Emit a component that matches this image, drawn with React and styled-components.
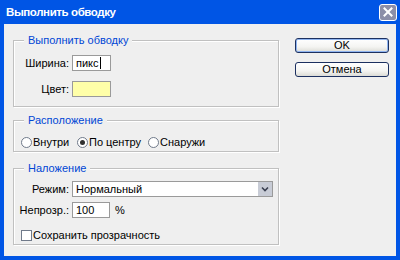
import React from 'react';
import styled, { createGlobalStyle } from 'styled-components';

const Global = createGlobalStyle`
  html, body { margin: 0; padding: 0; }
  body {
    width: 400px; height: 260px; overflow: hidden;
    font-family: "Liberation Sans", Arial, sans-serif;
    font-size: 11px; line-height: 13px; color: #000;
  }
`;

const Window = styled.div`
  width: 400px; height: 260px; box-sizing: border-box;
  background: #0055e5;
  display: flex; flex-direction: column;
`;

const TitleBar = styled.div`
  height: 24px; flex-shrink: 0;
  display: flex; align-items: center; justify-content: space-between;
  padding: 0 3px 0 6px;
`;

const Title = styled.div`
  color: #fff; font-weight: bold; font-size: 11.5px; letter-spacing: -0.4px;
`;

const CloseBtn = styled.div`
  width: 18px; height: 17px; box-sizing: border-box;
  border: 1px solid #fff; border-radius: 3px;
  background: #8c8fa8;
  display: flex; align-items: center; justify-content: center;
`;

const Body = styled.div`
  flex: 1; margin: 0 4px 4px;
  background: #efefef;
  display: flex; gap: 16px;
  padding: 0 0 0 9px;
`;

const LeftCol = styled.div`
  width: 266px; padding-top: 16px;
  display: flex; flex-direction: column;
`;

const RightCol = styled.div`
  width: 94px; padding-top: 14px;
  display: flex; flex-direction: column; gap: 9px;
`;

const Group = styled.div`
  position: relative;
  margin-top: ${p => p.$mt || 0}px;
  padding: ${p => p.$pt}px 4px ${p => p.$pb}px 0;
  border: 1px solid #c0c0c0;
  box-shadow: 1px 1px 0 #fff, inset 1px 1px 0 #fff;
`;

const Legend = styled.div`
  position: absolute; top: -7px; left: 10px;
  padding: 0 4px; background: #efefef;
  color: #0046d5;
`;

const FormGrid = styled.div`
  display: grid;
  grid-template-columns: 55px auto;
  column-gap: 3px;
  row-gap: ${p => p.$gap}px;
  align-items: center;
`;

const Label = styled.div`
  text-align: right;
`;

const Field = styled.div`
  display: flex; align-items: center; gap: 5px;
`;

const TextBox = styled.div`
  width: ${p => p.$w}px; height: 16px; box-sizing: border-box;
  border: 1px solid #9a9a9a; background: #fff;
  padding: 0 3px; display: flex; align-items: center;
`;

const Caret = styled.span`
  display: inline-block; width: 1px; height: 12px; background: #000; margin-left: 1px;
`;

const Swatch = styled.div`
  width: 39px; height: 16px; box-sizing: border-box;
  border: 1px solid #9a9a9a; background: #ffffa8;
`;

const RadioRow = styled.div`
  display: flex; align-items: center; padding-left: 7px; height: 14px;
`;

const RadioItem = styled.label`
  display: flex; align-items: center; gap: 1px;
  width: ${p => (p.$w ? `${p.$w}px` : 'auto')};
`;

const RadioCircle = styled.span`
  width: 11px; height: 11px; box-sizing: border-box; border-radius: 50%;
  border: 1px solid #707a8a; background: #fff;
  display: flex; align-items: center; justify-content: center;
  &::after {
    content: ''; width: 5px; height: 5px; border-radius: 50%;
    background: ${p => (p.$on ? '#303030' : 'transparent')};
  }
`;

const Select = styled.div`
  width: 201px; height: 16px; box-sizing: border-box;
  border: 1px solid #9a9a9a; background: #fff;
  display: flex; align-items: center; justify-content: space-between;
  padding-left: 3px;
`;

const SelectBtn = styled.div`
  width: 14px; height: 14px; background: #c8ccd6;
  display: flex; align-items: center; justify-content: center;
`;

const CheckRow = styled.label`
  grid-column: 1 / -1;
  margin-top: 6px;
  display: flex; align-items: center; gap: 1px; padding-left: 7px; height: 13px;
`;

const CheckBox = styled.span`
  width: 11px; height: 11px; box-sizing: border-box;
  border: 1px solid #707a8a; background: #fff;
`;

const Button = styled.div`
  height: 15px; box-sizing: border-box;
  border: 1px solid #1c3060; border-radius: 3px;
  background: linear-gradient(#ffffff 0%, #f4f4f2 60%, #dcdcd6 100%);
  box-shadow: ${p => (p.$default ? 'inset 0 0 0 1px #8fb4f0' : 'none')};
  display: flex; align-items: center; justify-content: center;
  color: #000;
`;

export default function App() {
  return (
    <>
      <Global />
      <Window>
        <TitleBar>
          <Title>Выполнить обводку</Title>
          <CloseBtn>
            <svg width="10" height="10" viewBox="0 0 10 10">
              <path d="M1.5 1.5 L8.5 8.5 M8.5 1.5 L1.5 8.5" stroke="#fff" strokeWidth="2" strokeLinecap="square" />
            </svg>
          </CloseBtn>
        </TitleBar>
        <Body>
          <LeftCol>
            <Group $pt={14} $pb={9}>
              <Legend>Выполнить обводку</Legend>
              <FormGrid $gap={10}>
                <Label>Ширина:</Label>
                <TextBox $w={39}>пикс<Caret /></TextBox>
                <Label>Цвет:</Label>
                <Swatch />
              </FormGrid>
            </Group>
            <Group $mt={13} $pt={14} $pb={2}>
              <Legend>Расположение</Legend>
              <RadioRow>
                <RadioItem $w={56}><RadioCircle />Внутри</RadioItem>
                <RadioItem $w={71}><RadioCircle $on />По центру</RadioItem>
                <RadioItem><RadioCircle />Снаружи</RadioItem>
              </RadioRow>
            </Group>
            <Group $mt={16} $pt={12} $pb={2}>
              <Legend>Наложение</Legend>
              <FormGrid $gap={5}>
                <Label>Режим:</Label>
                <Select>
                  Нормальный
                  <SelectBtn>
                    <svg width="8" height="6" viewBox="0 0 8 6">
                      <path d="M1 1.5 L4 4.5 L7 1.5" stroke="#3a3f50" strokeWidth="1.6" fill="none" />
                    </svg>
                  </SelectBtn>
                </Select>
                <Label>Непрозр.:</Label>
                <Field>
                  <TextBox $w={38}>100</TextBox>
                  %
                </Field>
                <CheckRow>
                  <CheckBox />Сохранить прозрачность
                </CheckRow>
              </FormGrid>
            </Group>
          </LeftCol>
          <RightCol>
            <Button $default>OK</Button>
            <Button>Отмена</Button>
          </RightCol>
        </Body>
      </Window>
    </>
  );
}
